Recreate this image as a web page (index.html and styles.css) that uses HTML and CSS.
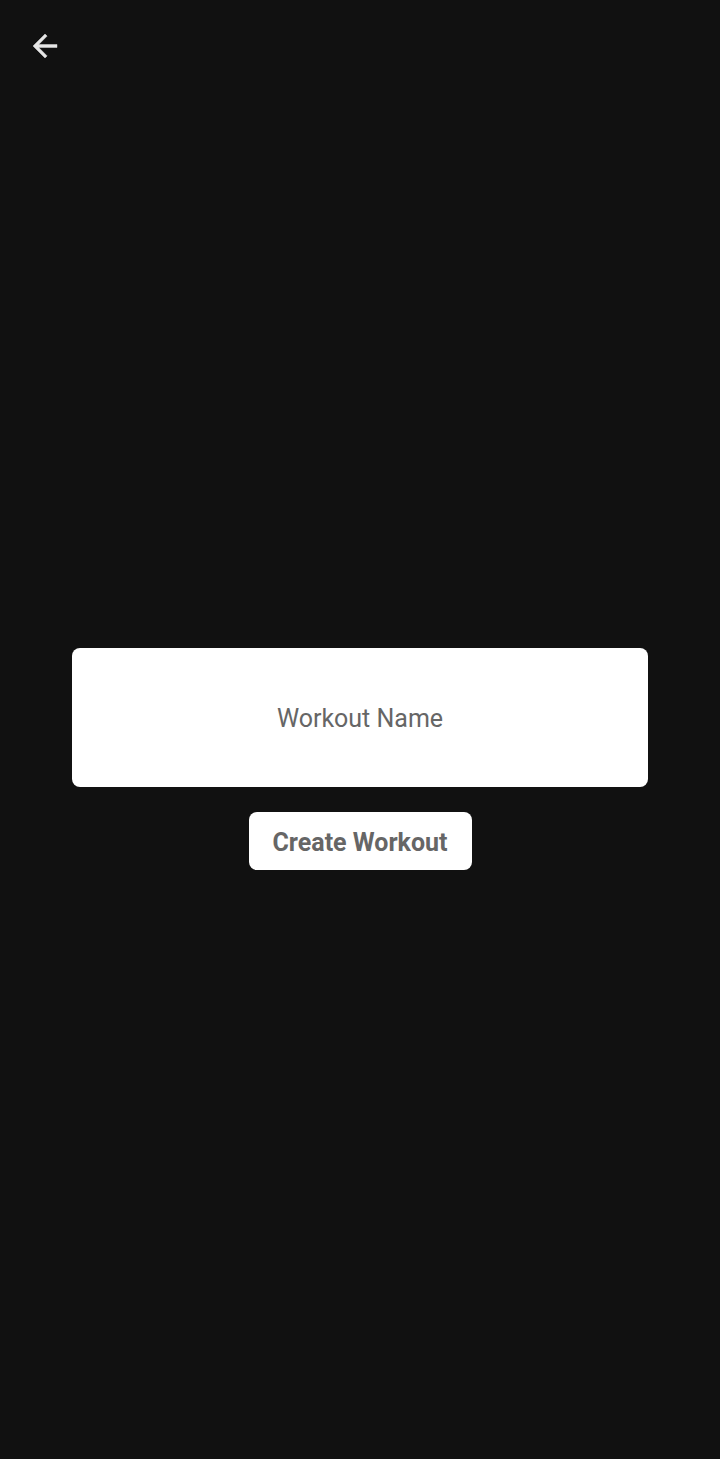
FILE: index.html
```html
<!DOCTYPE html>
<html>
<head>
<meta charset="utf-8">
<link rel="stylesheet" href="styles.css">
</head>
<body>
<div class="screen">
  <header class="topbar">
    <button class="back" aria-label="Back">
      <svg width="36" height="36" viewBox="0 0 24 24"><path d="M20 11H7.83l5.59-5.59L12 4l-8 8 8 8 1.41-1.41L7.83 13H20v-2z" fill="#e6e6e6" stroke="#e6e6e6" stroke-width="0.3"/></svg>
    </button>
  </header>
  <main class="content">
    <div class="name-field">Workout Name</div>
    <button class="create">Create Workout</button>
  </main>
</div>
</body>
</html>
```
FILE: styles.css
```css
html, body {
  margin: 0;
  padding: 0;
  background: #111111;
}
.screen {
  width: 720px;
  height: 1459px;
  display: flex;
  flex-direction: column;
  font-family: Roboto, "Noto Sans", sans-serif;
}
.topbar {
  height: 92px;
  padding: 28px 0 0 27px;
  box-sizing: border-box;
}
.back {
  background: none;
  border: 0;
  padding: 0;
  width: 36px;
  height: 36px;
  display: block;
}
.back svg { display: block; }
.content {
  padding-top: 556px;
  display: flex;
  flex-direction: column;
  align-items: center;
  gap: 25px;
}
.name-field {
  width: 576px;
  height: 139px;
  background: #ffffff;
  border-radius: 8px;
  display: flex;
  align-items: center;
  justify-content: center;
  color: #666666;
  font-size: 25px;
  padding-top: 1px;
  box-sizing: border-box;
}
.create {
  width: 223px;
  height: 58px;
  background: #ffffff;
  border: 0;
  border-radius: 8px;
  color: #666666;
  font-family: Roboto, "Noto Sans", sans-serif;
  font-weight: 700;
  font-size: 25px;
  padding: 2px 0 0;
}
```
